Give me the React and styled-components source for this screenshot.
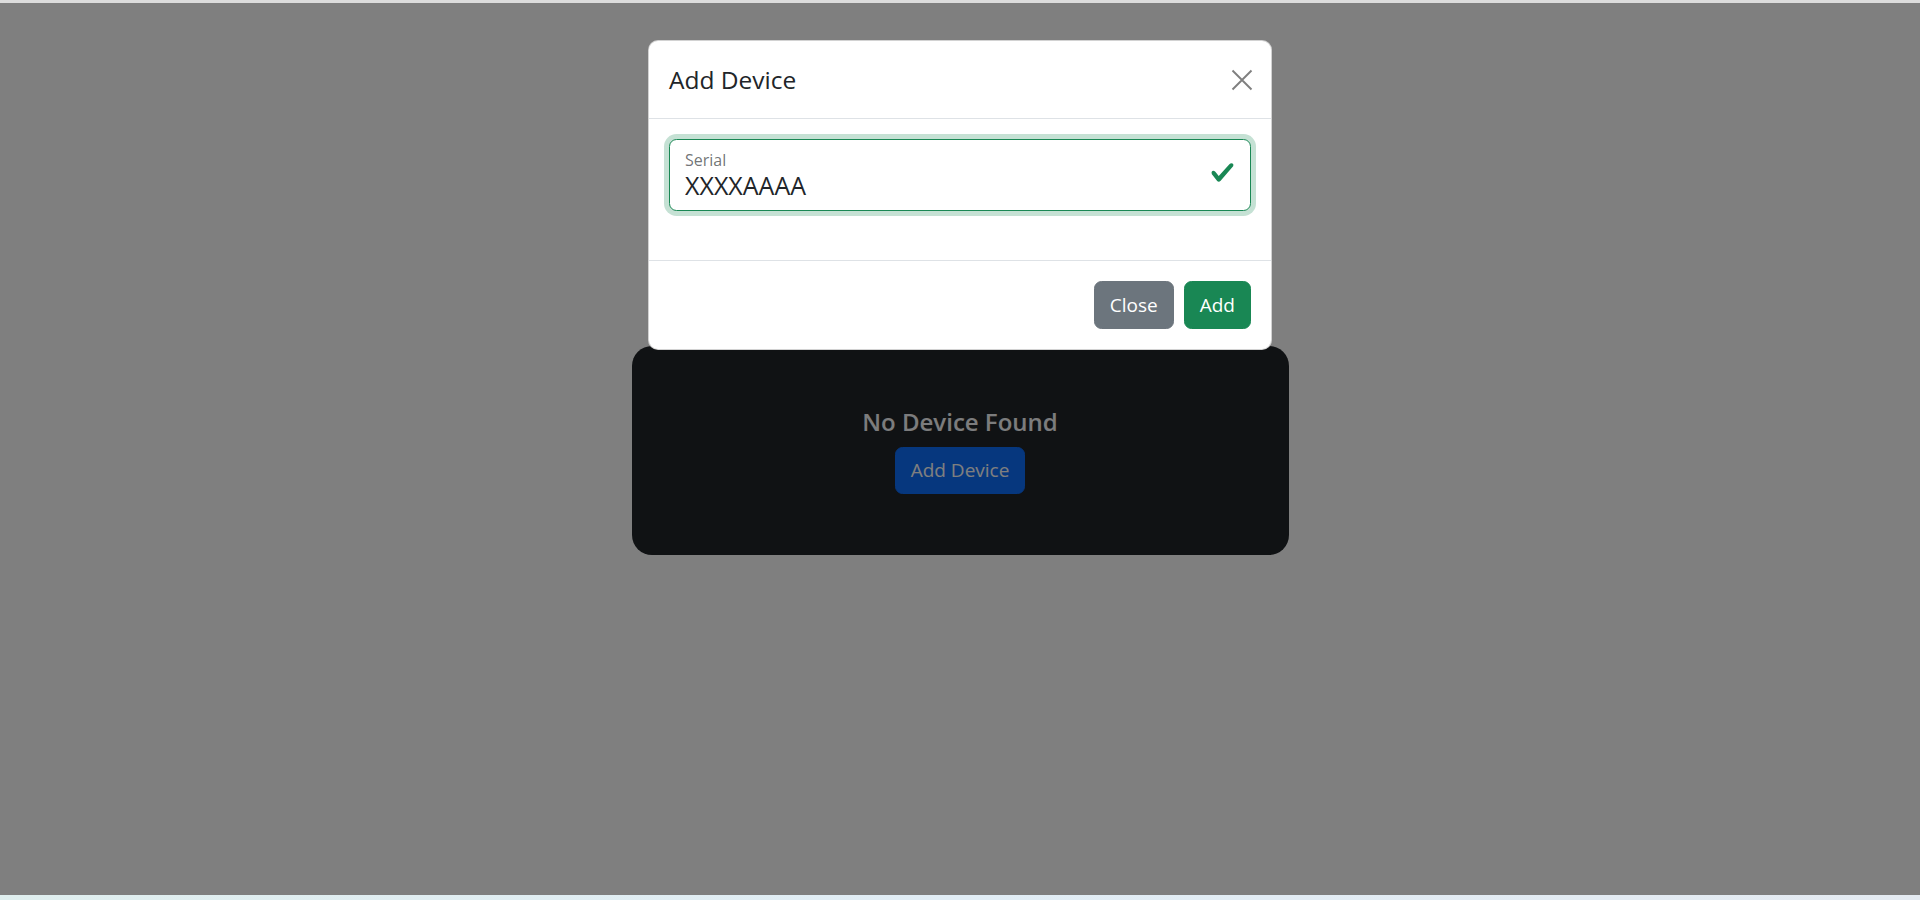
import React from 'react';
import styled, { createGlobalStyle } from 'styled-components';

const GlobalStyle = createGlobalStyle`
  html, body {
    margin: 0;
    padding: 0;
    background: #fff;
  }
  body {
    font-family: "Open Sans", "Noto Sans", "Liberation Sans", sans-serif;
    color: #212529;
  }
  * {
    box-sizing: border-box;
  }
`;

const Frame = styled.div`
  display: flex;
  flex-direction: column;
  height: 900px;
  overflow: hidden;
`;

const TopEdge = styled.div`
  height: 3px;
  background: #dcdcdc;
`;

const BottomEdge = styled.div`
  height: 5px;
  background: linear-gradient(90deg, #dfeeee 0%, #e1edf5 50%, #e4eaf1 100%);
`;

const Viewport = styled.main`
  position: relative;
  flex: 1;
  display: flex;
  align-items: center;
  justify-content: center;
`;

const EmptyCard = styled.section`
  width: 657px;
  margin-top: 3px;
  padding: 61px 20px 61px;
  background: #212529;
  border-radius: 20px;
  display: flex;
  flex-direction: column;
  align-items: center;
`;

const EmptyTitle = styled.h5`
  margin: 0 0 10px;
  font-size: 24px;
  font-weight: 600;
  line-height: 30px;
  color: #f8f9fa;
`;

const Backdrop = styled.div`
  position: absolute;
  inset: 0;
  background: rgba(0, 0, 0, 0.5);
  display: flex;
  justify-content: center;
  align-items: flex-start;
  padding-top: 37px;
`;

const Modal = styled.div`
  width: 624px;
  background: #fff;
  border: 1px solid rgba(0, 0, 0, 0.175);
  border-radius: 10px;
  display: flex;
  flex-direction: column;
`;

const ModalHeader = styled.div`
  display: flex;
  align-items: center;
  padding: 20px 20px 19.5px;
  border-bottom: 1px solid #dee2e6;
`;

const ModalTitle = styled.h5`
  margin: 0;
  font-size: 24.5px;
  font-weight: 500;
  line-height: 37.5px;
  color: #212529;
`;

const CloseX = styled.button`
  margin: -10px -6px -10px auto;
  width: 30px;
  height: 30px;
  padding: 4px;
  border: 0;
  background: transparent;
  display: flex;
  align-items: center;
  justify-content: center;
  cursor: pointer;
`;

const ModalBody = styled.div`
  padding: 20px;
`;

const Field = styled.div`
  position: relative;
  margin-bottom: 29px;
`;

const Input = styled.input`
  display: block;
  width: 100%;
  height: 72px;
  padding: 30px 50px 10px 15px;
  font-family: inherit;
  font-size: 25px;
  line-height: 30px;
  color: #212529;
  background: #fff;
  border: 1px solid #198754;
  border-radius: 7.5px;
  box-shadow: 0 0 0 5px rgba(25, 135, 84, 0.25);
  outline: none;
`;

const FloatLabel = styled.label`
  position: absolute;
  top: 9px;
  left: 16px;
  font-size: 16px;
  line-height: 25px;
  color: rgba(33, 37, 41, 0.65);
  pointer-events: none;
`;

const ValidIcon = styled.svg`
  position: absolute;
  right: 16px;
  top: 21px;
  width: 25px;
  height: 25px;
`;

const ModalFooter = styled.div`
  display: flex;
  justify-content: flex-end;
  align-items: center;
  gap: 10px;
  padding: 20px 20px 20.5px;
  border-top: 1px solid #dee2e6;
`;

const Button = styled.button`
  font-family: inherit;
  font-size: 19px;
  line-height: 30px;
  padding: 7.5px 15px 8px;
  border-radius: 7.5px;
  border: 1px solid ${(p) => p.$bg};
  background: ${(p) => p.$bg};
  color: #fff;
  cursor: pointer;
`;

export default function App() {
  return (
    <>
      <GlobalStyle />
      <Frame>
        <TopEdge />
        <Viewport>
          <EmptyCard>
            <EmptyTitle>No Device Found</EmptyTitle>
            <Button $bg="#0d6efd">Add Device</Button>
          </EmptyCard>
          <Backdrop>
            <Modal>
              <ModalHeader>
                <ModalTitle>Add Device</ModalTitle>
                <CloseX aria-label="Close">
                  <svg width="22" height="22" viewBox="0 0 22 22">
                    <path d="M1.5 1.5 20.5 20.5M20.5 1.5 1.5 20.5" stroke="#000" strokeOpacity="0.5" strokeWidth="1.9" />
                  </svg>
                </CloseX>
              </ModalHeader>
              <ModalBody>
                <Field>
                  <Input id="serial" defaultValue="XXXXAAAA" />
                  <FloatLabel htmlFor="serial">Serial</FloatLabel>
                  <ValidIcon viewBox="0 0 8 8">
                    <path fill="#198754" d="M2.3 6.73.6 4.53c-.4-1.04.46-1.4 1.1-.8l1.1 1.4 3.4-3.8c.6-.63 1.6-.27 1.2.7l-4 4.6c-.43.5-.8.4-1.1.1z" />
                  </ValidIcon>
                </Field>
              </ModalBody>
              <ModalFooter>
                <Button $bg="#6c757d">Close</Button>
                <Button $bg="#198754">Add</Button>
              </ModalFooter>
            </Modal>
          </Backdrop>
        </Viewport>
        <BottomEdge />
      </Frame>
    </>
  );
}
